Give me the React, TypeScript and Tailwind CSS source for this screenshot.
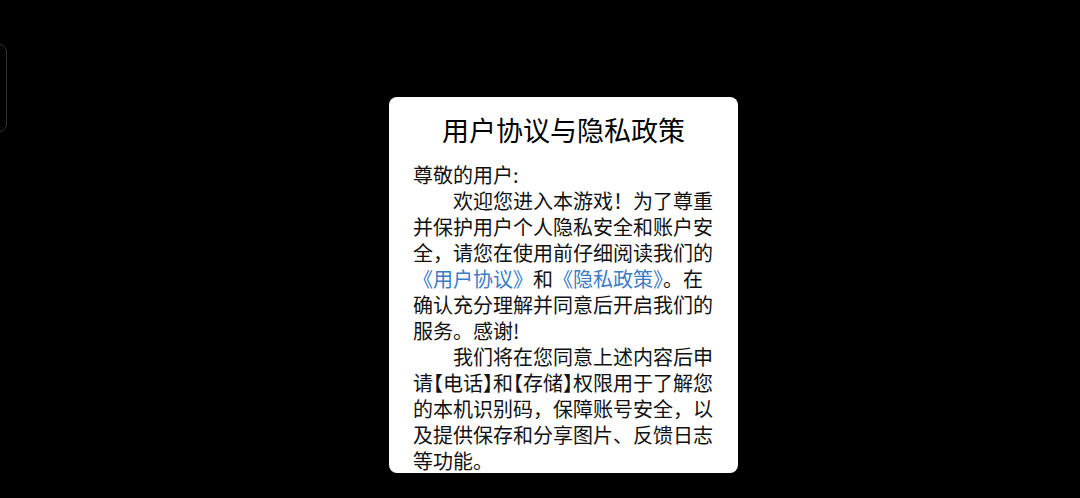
const LINK = 'text-[#3a7cc6]'
// 半宽方括号：让前一个字/右括号本身少占 10px
const TIGHT = 'tracking-[-10px]'

export default function App() {
  return (
    <div
      className="relative h-[498px] w-[1080px] overflow-hidden bg-black"
      style={{ fontFamily: '"Noto Sans CJK SC", "Noto Sans", sans-serif' }}
    >
      {/* 左侧被裁掉的悬浮按钮 */}
      <div className="absolute left-[-20px] top-[44px] h-[88px] w-[27px] rounded-[8px] border border-[#2e3136]" />

      <div className="ml-[389px] mt-[97px] h-[376px] w-[349px] overflow-hidden rounded-[8px] bg-white pt-[13px]">
        <div className="text-center text-[27px] leading-[40px] text-black">用户协议与隐私政策</div>
        <div className="mt-[12px] whitespace-nowrap px-[24px] text-[20px] leading-[26px] text-[#111]">
          <div>尊敬的用户:</div>
          <div className="pl-[40px]">欢迎您进入本游戏！为了尊重</div>
          <div>并保护用户个人隐私安全和账户安</div>
          <div>全，请您在使用前仔细阅读我们的</div>
          <div>
            <span className={LINK}>《用户协议》</span>和<span className={LINK}>《隐私政策》</span>。在
          </div>
          <div>确认充分理解并同意后开启我们的</div>
          <div>服务。感谢!</div>
          <div className="pl-[40px]">我们将在您同意上述内容后申</div>
          <div>
            <span className={TIGHT}>请</span>【电话<span className={TIGHT}>】</span>
            <span className={TIGHT}>和</span>【存储<span className={TIGHT}>】</span>权限用于了解您
          </div>
          <div>的本机识别码，保障账号安全，以</div>
          <div>及提供保存和分享图片、反馈日志</div>
          <div>等功能。</div>
        </div>
      </div>
    </div>
  )
}
